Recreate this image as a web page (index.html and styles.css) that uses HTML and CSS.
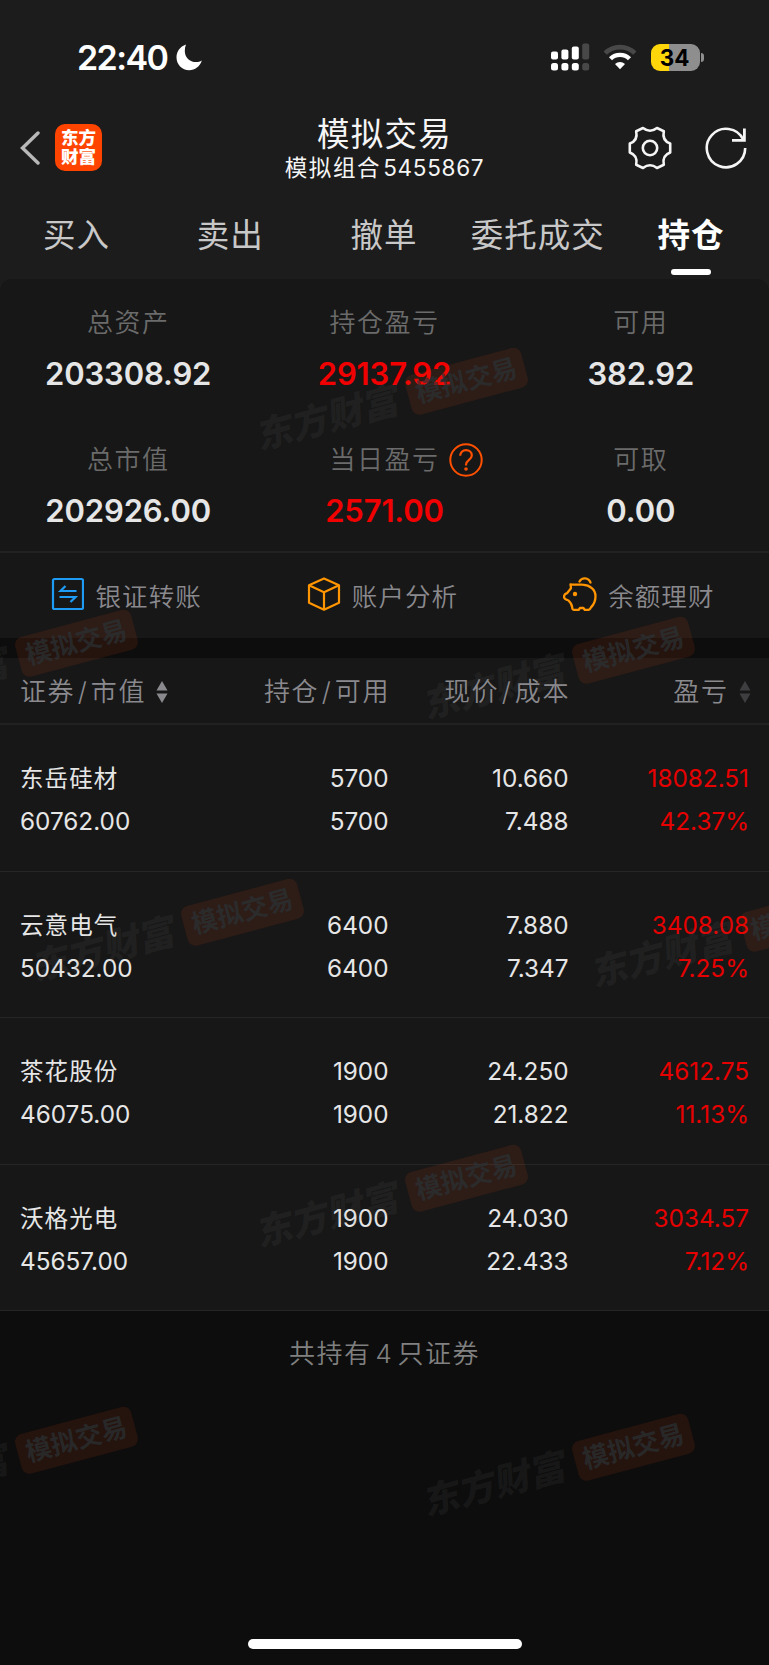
FILE: index.html
```html
<!DOCTYPE html>
<html lang="zh-CN">
<head>
  <meta charset="UTF-8">
  <title>模拟交易</title>
  <link rel="stylesheet" href="styles.css">
</head>
<body>

<div class="page">

  <div class="status-bar">
    <div class="clock">
      <span>22:40</span>
      <svg width="26" height="27" viewBox="0 0 26 27"><path d="M10 .5C4 2.500 .5 7.500 .5 13.500c0 7 5.500 12.700 12.700 12.700 5.800 0 10.800-3.600 12.600-9.600-1.700 1-3.600 1.500-5.700 1.500-6.500 0-11.300-4.800-11.300-11.200C8.800 4.500 9.200 2.400 10 .5z" fill="#fff"/></svg>
    </div>
    <div class="status-icons">
      <svg width="39" height="28" viewBox="0 0 39 28" fill="#fff">
        <rect x="0" y="8.500" width="7" height="8" rx="2"/><rect x="0" y="20" width="7" height="7.500" rx="2.500"/>
        <rect x="10.400" y="6.500" width="7" height="10" rx="2"/><rect x="10.400" y="20" width="7" height="7.500" rx="2.500"/>
        <rect x="20.800" y="3.500" width="7" height="13" rx="2"/><rect x="20.800" y="20" width="7" height="7.500" rx="2.500"/>
        <g fill="#484848"><rect x="31.200" y=".5" width="7" height="16" rx="2"/><rect x="31.200" y="20" width="7" height="7.500" rx="2.500"/></g>
      </svg>
      <svg class="wifi" width="34" height="26" viewBox="0 0 34 26" fill="none">
        <path d="M2.200 9.200a21 21 0 0 1 29.600 0" stroke="#484848" stroke-width="4.600"/>
        <path d="M7.500 14.700a13.600 13.600 0 0 1 19 0" stroke="#fff" stroke-width="4.400"/>
        <path d="M17 25.200l-5-5.200a7.200 7.200 0 0 1 10 0z" fill="#fff"/>
      </svg>
      <div class="battery"><span>34</span></div>
    </div>
  </div>

  <div class="nav">
    <div class="nav-left">
      <svg width="20" height="34" viewBox="0 0 20 34"><path d="M18 2L2.500 17 18 32" fill="none" stroke="#b8b8b8" stroke-width="3.400" stroke-linecap="round"/></svg>
      <div class="logo">东方<br>财富</div>
    </div>
    <div class="nav-title">
      <h1>模拟交易</h1>
      <p>模拟组合<span class="num">5455867</span></p>
    </div>
    <div class="nav-right">
      <svg width="44" height="44" viewBox="-22 -22 44 44" fill="none" stroke="#f5f5f5" stroke-width="2.600" stroke-linejoin="round">
        <path d="M20.200 4.500C14.500 6.500 12.500 10.500 13.800 16.800L7 20Q0 14.500-7 20L-13.800 16.800C-12.500 10.500-14.500 6.500-20.200 4.500V-4.500C-14.500-6.500-12.500-10.500-13.800-16.800L-7-20Q0-14.500 7-20L13.800-16.800C12.500-10.500 14.500-6.500 20.200-4.500z"/>
        <circle r="7.200"/>
      </svg>
      <svg width="44" height="44" viewBox="-22 -22 44 44" fill="none" stroke="#f5f5f5" stroke-width="2.600">
        <path d="M19.200 0A19.200 19.200 0 1 1 17.200-8.500"/>
        <path d="M18.400-19.500V-7.600H6" stroke-width="2.800"/>
      </svg>
    </div>
  </div>

  <div class="tabs">
    <a>买入</a>
    <a>卖出</a>
    <a>撤单</a>
    <a>委托成交</a>
    <a class="active">持仓</a>
  </div>

  <div class="summary">
    <div class="stat"><label>总资产</label><b>203308.92</b></div>
    <div class="stat"><label>持仓盈亏</label><b class="up">29137.92</b></div>
    <div class="stat"><label>可用</label><b>382.92</b></div>
    <div class="stat"><label>总市值</label><b>202926.00</b></div>
    <div class="stat">
      <label>当日盈亏
        <svg class="help" width="34" height="34" viewBox="0 0 34 34" fill="none" stroke="#ff5000" stroke-width="2">
          <circle cx="17" cy="17" r="15.700"/>
          <path d="M11.200 12.800c0-3.300 2.500-5.600 5.800-5.600s5.800 2.200 5.800 5.300c0 4.300-5.800 4.600-5.800 9.300v.7" stroke-width="2.200"/>
          <circle cx="17" cy="26" r="1.800" fill="#ff5000" stroke="none"/>
        </svg>
      </label>
      <b class="up">2571.00</b>
    </div>
    <div class="stat"><label>可取</label><b>0.00</b></div>
  </div>

  <div class="actions">
    <a>
      <svg width="34" height="34" viewBox="0 0 34 34" fill="none" stroke="#1e9bf5" stroke-width="2.200">
        <rect x="3" y="2" width="30" height="30" rx="1.500"/>
        <path d="M26.500 14H10.500l5-5M9.500 20h16l-5 5"/>
      </svg>
      银证转账
    </a>
    <a>
      <svg width="34" height="34" viewBox="0 0 34 34" fill="none" stroke="#ff9500" stroke-width="2.200" stroke-linejoin="round">
        <path d="M17 1.500l15 6.800v17.500L17 32.700 2 25.800V8.300zM2 8.300l15 6.900 15-6.900M17 15.200v17.500"/>
      </svg>
      账户分析
    </a>
    <a>
      <svg width="34" height="34" viewBox="0 0 34 34" fill="none" stroke="#ff9500" stroke-width="2.300" stroke-linejoin="round" stroke-linecap="round">
        <path d="M7.500 7.300C10.500 8 15 7.200 19.500 7.700c7.500.5 13 4.600 13 11.500 0 4.500-2 8.500-4.500 11.200-.8 2-1.500 2.600-3.500 2.600h-2.600l-1.500-2h-3.400l-1.500 2h-3.300c-3 0-3-1-3-2.500 0-3-2-5.300-3.700-7-3.300-.9-4.500-2-4.500-3.700 0-2.500 1-3 3-3.600l4-5z"/>
        <path d="M16.500 4.500c2.500-4.500 9-4 11 1"/>
        <circle cx="12" cy="17" r="2.200" fill="#ff9500" stroke="none"/>
      </svg>
      余额理财
    </a>
  </div>

  <div class="table">
    <div class="row head">
      <div>证券<i>/</i>市值<svg class="sort" width="12" height="24" viewBox="0 0 12 24" fill="#8a898e"><path d="M6 1l5.500 9.500H.5zM6 23L.5 13.500h11z"/></svg></div>
      <div>持仓<i>/</i>可用</div>
      <div>现价<i>/</i>成本</div>
      <div>盈亏<svg class="sort" width="12" height="24" viewBox="0 0 12 24" fill="#3e3e40"><path d="M6 1l5.500 9.500H.5zM6 23L.5 13.500h11z"/></svg></div>
    </div>
    <div class="row">
      <div><span class="name">东岳硅材</span><br>60762.00</div>
      <div>5700<br>5700</div>
      <div>10.660<br>7.488</div>
      <div class="up">18082.51<br>42.37%</div>
    </div>
    <div class="row">
      <div><span class="name">云意电气</span><br>50432.00</div>
      <div>6400<br>6400</div>
      <div>7.880<br>7.347</div>
      <div class="up">3408.08<br>7.25%</div>
    </div>
    <div class="row">
      <div><span class="name">茶花股份</span><br>46075.00</div>
      <div>1900<br>1900</div>
      <div>24.250<br>21.822</div>
      <div class="up">4612.75<br>11.13%</div>
    </div>
    <div class="row">
      <div><span class="name">沃格光电</span><br>45657.00</div>
      <div>1900<br>1900</div>
      <div>24.030<br>22.433</div>
      <div class="up">3034.57<br>7.12%</div>
    </div>
  </div>

  <div class="total">共持有<span class="num">4</span>只证券</div>

  <div class="home-bar"></div>

  <!-- watermarks -->
  <div class="wm wm1"><b>东方财富</b><span>模拟交易</span></div>
  <div class="wm wm2"><b>东方财富</b><span>模拟交易</span></div>
  <div class="wm wm3"><b>东方财富</b><span>模拟交易</span></div>
  <div class="wm wm4"><b>东方财富</b><span>模拟交易</span></div>
  <div class="wm wm5"><b>东方财富</b><span>模拟交易</span></div>
  <div class="wm wm6"><b>东方财富</b><span>模拟交易</span></div>
  <div class="wm wm7"><b>东方财富</b><span>模拟交易</span></div>
  <div class="wm wm8"><b>东方财富</b><span>模拟交易</span></div>
</div>

</body>
</html>
```
FILE: styles.css
```css
* {
  box-sizing: border-box;
}
body {
  margin: 0;
  background: #0d0d0d;
  font-family: Inter, "Noto Sans CJK SC", sans-serif;
  color: #e6e6e6;
}
svg {
  display: block;
  flex: none;
}
.page {
  position: relative;
  display: flex;
  flex-direction: column;
  width: 769px;
  height: 1665px;
  overflow: hidden;
}

/* status bar */
.status-bar {
  display: flex;
  justify-content: space-between;
  height: 104px;
  padding: 43px 64px 0 77px;
  background: #1c1c1c;
}
.clock {
  display: flex;
  align-items: center;
  gap: 9px;
  height: 29px;
  font-size: 34px;
  font-weight: 600;
  letter-spacing: -1.6px;
  color: #fff;
}
.status-icons {
  display: flex;
  align-items: center;
  height: 28px;
}
.wifi {
  margin: 0 14px 0 13px;
}
.battery {
  position: relative;
  width: 49px;
  height: 27px;
  margin-right: 5px;
  border-radius: 9px;
  background: linear-gradient(to right, #ffd60a 18px, #8e8e8e 18px);
  color: #000;
  font-size: 22.5px;
  font-weight: 700;
  line-height: 27px;
  text-align: center;
}
.battery span {
  margin-left: -2px;
}
.battery::after {
  content: "";
  position: absolute;
  right: -4px;
  top: 9px;
  width: 3px;
  height: 9px;
  border-radius: 0 3px 3px 0;
  background: #8e8e8e;
}

/* title bar */
.nav {
  display: grid;
  grid-template-columns: 200px 1fr 200px;
  height: 92px;
  background: #1c1c1c;
}
.nav-left {
  display: flex;
  align-items: center;
  gap: 15px;
  height: 87px;
  padding-left: 20px;
}
.logo {
  width: 47px;
  height: 47px;
  padding-top: 4px;
  border-radius: 10px;
  background: #ff4400;
  color: #fff;
  font-size: 17.5px;
  font-weight: 900;
  line-height: 19px;
  text-align: center;
}
.nav-title {
  text-align: center;
}
.nav-title h1 {
  margin: 12px 0 0;
  font-size: 32.5px;
  font-weight: 400;
  letter-spacing: 1.3px;
  line-height: 38px;
  color: #f5f5f5;
}
.nav-title p {
  margin: 0;
  font-size: 22.5px;
  font-weight: 400;
  letter-spacing: 1.6px;
  line-height: 27px;
  color: #f5f5f5;
}
.nav-title .num {
  margin-left: 2px;
  letter-spacing: .7px;
}
.nav-right {
  display: flex;
  align-items: center;
  justify-content: flex-end;
  gap: 32px;
  height: 88px;
  padding-right: 21px;
}

.tabs {
  position: relative;
  z-index: 1;
  display: grid;
  grid-template-columns: repeat(5, 1fr);
  height: 83px;
  font-size: 32.5px;
  letter-spacing: 1px;
  line-height: 80px;
  text-align: center;
  color: #c8c8c8;
  background: #1c1c1c;
}
.tabs a {
  margin-left: -1px;
}
.tabs .active {
  display: flex;
  flex-direction: column;
  align-items: center;
  margin-left: -2px;
  color: #fff;
  font-weight: 700;
}
.tabs .active::after {
  content: "";
  width: 40px;
  height: 6px;
  margin-top: -7px;
  border-radius: 3px;
  background: #fff;
}

/* account summary */
.summary {
  display: grid;
  grid-template-columns: repeat(3, 1fr);
  grid-auto-rows: 137px;
  height: 274px;
  border-bottom: 2px solid #222;
  border-radius: 12px 12px 0 0;
  background: #171717;
  box-shadow: 0 -12px 0 #1c1c1c;
}
.stat {
  display: flex;
  flex-direction: column;
  align-items: center;
  padding-top: 24px;
}
.stat label {
  position: relative;
  font-size: 26px;
  letter-spacing: 1.5px;
  line-height: 40px;
  color: #6b6b6b;
  font-weight: 350;
}
.stat b {
  margin-top: 10px;
  font-size: 31px;
  font-weight: 600;
  letter-spacing: -.15px;
  line-height: 42px;
}
.stat .up {
  color: #f00000;
}
.help {
  position: absolute;
  left: 120px;
  top: 3px;
}
.actions {
  display: grid;
  grid-template-columns: repeat(3, 1fr);
  height: 85px;
  padding-bottom: 3px;
  background: #171717;
  color: #8a898e;
  font-size: 25.5px;
  letter-spacing: 1.1px;
  font-weight: 350;
}
.actions a {
  display: flex;
  align-items: center;
  justify-content: center;
  gap: 11px;
  padding-right: 4px;
}

/* holdings */
.table {
  margin-top: 20px;
  background: #171717;
}
.row {
  display: grid;
  grid-template-columns: 208px 160.5px 180px 180.5px;
  align-items: center;
  height: 146.5px;
  padding: 5px 20px 0;
  border-bottom: 1px solid #262626;
  font-size: 24.3px;
  line-height: 43px;
  text-align: right;
}
.row > div:first-child {
  text-align: left;
}
.row .up {
  color: #e60000;
}
.name {
  font-size: 23.5px;
  letter-spacing: 1.1px;
}
.row.head {
  height: 67px;
  padding-top: 2px;
  border-bottom: 2px solid #222;
  color: #8a898e;
  font-size: 26px;
  font-weight: 350;
  letter-spacing: 1.6px;
}
.head div {
  margin-right: -1.5px;
}
.head i {
  font-style: normal;
  margin: 0 2.5px;
}
.sort {
  display: inline-block;
  margin-left: 10px;
  vertical-align: -3px;
}
.total {
  padding-top: 23px;
  font-size: 26px;
  font-weight: 350;
  letter-spacing: 1.5px;
  line-height: 40px;
  text-align: center;
  color: #808080;
}
.total .num {
  margin: 0 4px;
}
.home-bar {
  width: 274px;
  height: 10px;
  margin: auto auto 16px;
  border-radius: 5px;
  background: #fff;
}

.wm {
  position: absolute;
  display: flex;
  align-items: center;
  gap: 7px;
  width: 278px;
  height: 42px;
  margin: -21px 0 0 -139px;
  transform: rotate(-15deg);
  pointer-events: none;
}
.wm b {
  width: 150px;
  font-size: 36.5px;
  font-weight: 900;
  line-height: 42px;
  color: rgba(120, 120, 120, .1);
  transform: skewX(-12deg) translateX(2px);
  white-space: nowrap;
}
.wm span {
  width: 120px;
  height: 41px;
  border-radius: 8px;
  background: rgba(255, 80, 20, .1);
  color: rgba(42, 50, 55, .7);
  font-size: 26px;
  font-weight: 700;
  line-height: 39px;
  text-align: center;
}
.wm1 { left: 391px; top: 401px; }
.wm2 { left: 1px; top: 663px; }
.wm3 { left: 558px; top: 670px; }
.wm4 { left: 167px; top: 932px; }
.wm5 { left: 726px; top: 938px; }
.wm6 { left: 391px; top: 1198px; }
.wm7 { left: 1px; top: 1460px; }
.wm8 { left: 558px; top: 1467px; }
```
